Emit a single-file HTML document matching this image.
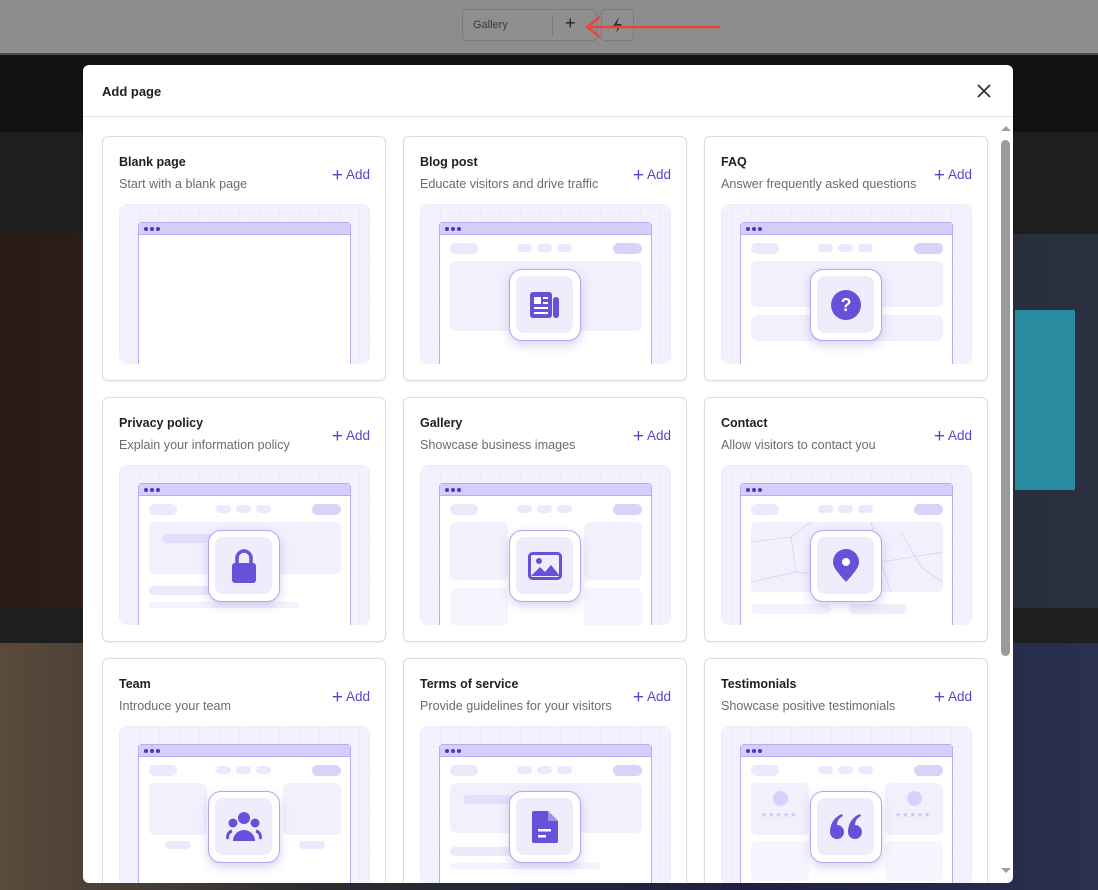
<!DOCTYPE html>
<html><head><meta charset="utf-8"><style>
*{box-sizing:border-box;margin:0;padding:0}
body{width:1098px;height:890px;overflow:hidden;position:relative;font-family:"Liberation Sans",sans-serif;background:#161616}
.bg{position:absolute}
.modal{position:absolute;left:83px;top:65px;width:930px;height:818px;background:#fff;border-radius:6px;overflow:hidden}
.hdr{height:52px;border-bottom:1px solid #e4e4e7;position:relative}
.hdr h1{position:absolute;left:19px;top:19px;font-size:13px;font-weight:bold;color:#1d1d22}
.x{position:absolute;right:21px;top:18px}
.card{position:absolute;width:284px;height:245px;border:1px solid #dcdce0;border-radius:6px;background:#fff;box-shadow:0 1px 2px rgba(0,0,0,.06)}
.t{position:absolute;left:16px;top:18px;font-size:12.5px;font-weight:bold;color:#1f1f24}
.d{position:absolute;left:16px;top:40px;font-size:12.6px;color:#6b6b72}
.add{position:absolute;right:15px;top:28px;font-size:13.5px;color:#5a45c8}
.add b{font-size:19px;font-weight:normal;vertical-align:-2px;margin-right:3px}
.il{position:absolute;left:16px;top:67px;width:251px;height:160px;border-radius:8px;overflow:hidden;background:#f3f1fd;
background-image:linear-gradient(rgba(200,195,235,.13) 1px,transparent 1px),linear-gradient(90deg,rgba(200,195,235,.13) 1px,transparent 1px);background-size:10px 10px}
.fr{position:absolute;left:19px;top:18px;width:213px;height:150px;background:#fff;border:1px solid #b6acee;border-radius:4px 4px 0 0}
.bar{height:12px;background:#d5cefb;border-bottom:1px solid #b6acee;padding:2px 0 0 5px;font-size:0}
.bar i{display:inline-block;width:4px;height:4px;border-radius:50%;background:#4b37c0;margin:2px 2px 0 0}
.p{position:absolute;border-radius:6px;background:#ece9fc}
.ib{position:absolute;left:89px;top:65px;width:72px;height:72px;background:#fff;border:1.5px solid #b3a8ee;border-radius:13px;box-shadow:0 4px 10px rgba(100,80,200,.25)}
.ib .in{position:absolute;left:6px;top:6px;width:57px;height:57px;background:#efedfb;border-radius:8px;display:flex;align-items:center;justify-content:center}
.sb{position:absolute;left:1001px;top:140px;width:9px;height:516px;background:#9b9b9b;border-radius:5px}
</style></head><body>
<div class="bg" style="left:0;top:0;width:1098px;height:55px;background:#8d8d8d;border-bottom:2px solid #4a4a4a"></div>
<div class="bg" style="left:462px;top:9px;width:135px;height:32px;border:1px solid #7c7c7c;border-radius:4px;background:#8f8f8f"></div>
<div class="bg" style="left:473px;top:19px;font-size:11px;color:#3a3a3a">Gallery</div>
<div class="bg" style="left:552px;top:15px;width:1px;height:20px;background:#777"></div>
<div class="bg" style="left:565px;top:13px;font-size:18px;color:#222">+</div>
<div class="bg" style="left:601px;top:9px;width:33px;height:32px;border:1px solid #7c7c7c;border-radius:4px;background:#8f8f8f"></div>
<svg class="bg" style="left:610px;top:16px" width="14" height="18"><path d="M9 1L3 10h5l-2 7 6-9H7z" fill="#333"/></svg>
<svg class="bg" style="left:580px;top:14px" width="145" height="24"><path d="M8 13 H140" stroke="#e8463c" stroke-width="2.5"/><path d="M20 3 L7 13 L20 23" stroke="#e8463c" stroke-width="2.5" fill="none"/></svg>
<div class="bg" style="left:0;top:57px;width:1098px;height:75px;background:#121212"></div>
<div class="bg" style="left:0;top:132px;width:1098px;height:102px;background:#1e1e1e"></div>
<div class="bg" style="left:0;top:234px;width:1098px;height:374px;background:linear-gradient(90deg,#2a1a16,#3a2420 40%,#1c2838 70%,#2a3040)"></div>
<div class="bg" style="left:1015px;top:310px;width:60px;height:180px;background:#2a8aa0"></div>
<div class="bg" style="left:0;top:608px;width:1098px;height:35px;background:#1e1e1e"></div>
<div class="bg" style="left:0;top:643px;width:1098px;height:247px;background:linear-gradient(90deg,#5a4a3a,#2a2a30 30%,#1c2240 70%,#2a3050)"></div>
<div class="modal">
<div class="hdr"><h1>Add page</h1><svg class="x" width="16" height="16"><path d="M2 2L14 14M14 2L2 14" stroke="#333" stroke-width="1.8"/></svg></div>
</div>
<div style="position:absolute;left:0;top:0;width:1013px;height:883px;overflow:hidden;clip-path:inset(118px 0 0 83px round 0 0 6px 6px)">

<div class="card" style="left:102px;top:136px"><div class="t">Blank page</div><div class="d">Start with a blank page</div><div class="add"><b>+</b>Add</div>
<div class="il"><div class="fr"><div class="bar"><i></i><i></i><i></i></div></div></div></div>

<div class="card" style="left:403px;top:136px"><div class="t">Blog post</div><div class="d">Educate visitors and drive traffic</div><div class="add"><b>+</b>Add</div>
<div class="il"><div class="fr"><div class="bar"><i></i><i></i><i></i></div>
<div class="p" style="left:10px;top:20px;width:28px;height:11px"></div><div class="p" style="left:77px;top:21px;width:15px;height:8px"></div><div class="p" style="left:97px;top:21px;width:15px;height:8px"></div><div class="p" style="left:117px;top:21px;width:15px;height:8px"></div><div class="p" style="left:173px;top:20px;width:29px;height:11px;background:#d9d3fa"></div>
<div class="p" style="left:10px;top:38px;width:192px;height:70px;background:#f2f0fd"></div></div>
<div class="ib"><div class="in"><svg width="32" height="30" viewBox="0 0 32 30"><rect x="1" y="2" width="22" height="26" rx="3" fill="#6552d8"/><rect x="24" y="7" width="6" height="21" rx="3" fill="#6552d8"/><rect x="5" y="7" width="7" height="7" fill="#fff"/><rect x="14" y="7" width="5" height="2" fill="#fff"/><rect x="14" y="12" width="5" height="2" fill="#fff"/><rect x="5" y="17" width="14" height="2" fill="#fff"/><rect x="5" y="22" width="14" height="2" fill="#fff"/></svg></div></div></div></div>

<div class="card" style="left:704px;top:136px"><div class="t">FAQ</div><div class="d">Answer frequently asked questions</div><div class="add"><b>+</b>Add</div>
<div class="il"><div class="fr"><div class="bar"><i></i><i></i><i></i></div>
<div class="p" style="left:10px;top:20px;width:28px;height:11px"></div><div class="p" style="left:77px;top:21px;width:15px;height:8px"></div><div class="p" style="left:97px;top:21px;width:15px;height:8px"></div><div class="p" style="left:117px;top:21px;width:15px;height:8px"></div><div class="p" style="left:173px;top:20px;width:29px;height:11px;background:#d9d3fa"></div>
<div class="p" style="left:10px;top:38px;width:192px;height:46px;background:#f2f0fd"></div>
<div class="p" style="left:10px;top:92px;width:192px;height:26px;background:#f2f0fd"></div></div>
<div class="ib"><div class="in"><svg width="32" height="32"><circle cx="16" cy="16" r="15" fill="#6552d8"/><text x="16" y="22" text-anchor="middle" font-size="18" font-weight="bold" fill="#fff" font-family="Liberation Sans">?</text></svg></div></div></div></div>

<div class="card" style="left:102px;top:397px"><div class="t">Privacy policy</div><div class="d">Explain your information policy</div><div class="add"><b>+</b>Add</div>
<div class="il"><div class="fr"><div class="bar"><i></i><i></i><i></i></div>
<div class="p" style="left:10px;top:20px;width:28px;height:11px"></div><div class="p" style="left:77px;top:21px;width:15px;height:8px"></div><div class="p" style="left:97px;top:21px;width:15px;height:8px"></div><div class="p" style="left:117px;top:21px;width:15px;height:8px"></div><div class="p" style="left:173px;top:20px;width:29px;height:11px;background:#d9d3fa"></div>
<div class="p" style="left:10px;top:38px;width:192px;height:52px;background:#f2f0fd"></div>
<div class="p" style="left:23px;top:50px;width:60px;height:9px;background:#e3defb"></div>
<div class="p" style="left:10px;top:102px;width:80px;height:9px"></div>
<div class="p" style="left:10px;top:118px;width:150px;height:6px;background:#f4f2fd"></div></div>
<div class="ib"><div class="in"><svg width="30" height="36" viewBox="0 0 30 36"><path d="M8 16V10a7 7 0 0 1 14 0v6" stroke="#6552d8" stroke-width="3.5" fill="none"/><rect x="3" y="15" width="24" height="20" rx="3" fill="#6552d8"/></svg></div></div></div></div>

<div class="card" style="left:403px;top:397px"><div class="t">Gallery</div><div class="d">Showcase business images</div><div class="add"><b>+</b>Add</div>
<div class="il"><div class="fr"><div class="bar"><i></i><i></i><i></i></div>
<div class="p" style="left:10px;top:20px;width:28px;height:11px"></div><div class="p" style="left:77px;top:21px;width:15px;height:8px"></div><div class="p" style="left:97px;top:21px;width:15px;height:8px"></div><div class="p" style="left:117px;top:21px;width:15px;height:8px"></div><div class="p" style="left:173px;top:20px;width:29px;height:11px;background:#d9d3fa"></div>
<div class="p" style="left:10px;top:38px;width:58px;height:58px;background:#f2f0fd"></div><div class="p" style="left:144px;top:38px;width:58px;height:58px;background:#f2f0fd"></div>
<div class="p" style="left:10px;top:104px;width:58px;height:40px;background:#f6f5fe"></div><div class="p" style="left:144px;top:104px;width:58px;height:40px;background:#f6f5fe"></div></div>
<div class="ib"><div class="in"><svg width="34" height="28" viewBox="0 0 34 28"><rect x="1.5" y="1.5" width="31" height="25" rx="3" fill="none" stroke="#6552d8" stroke-width="3"/><circle cx="11" cy="9" r="3" fill="#6552d8"/><path d="M3 24l9-9 5 5 6-7 9 11z" fill="#6552d8"/></svg></div></div></div></div>

<div class="card" style="left:704px;top:397px"><div class="t">Contact</div><div class="d">Allow visitors to contact you</div><div class="add"><b>+</b>Add</div>
<div class="il"><div class="fr"><div class="bar"><i></i><i></i><i></i></div>
<div class="p" style="left:10px;top:20px;width:28px;height:11px"></div><div class="p" style="left:77px;top:21px;width:15px;height:8px"></div><div class="p" style="left:97px;top:21px;width:15px;height:8px"></div><div class="p" style="left:117px;top:21px;width:15px;height:8px"></div><div class="p" style="left:173px;top:20px;width:29px;height:11px;background:#d9d3fa"></div>
<div class="p" style="left:10px;top:38px;width:192px;height:70px;background:#f2f0fd;border-radius:5px"><svg width="192" height="70" style="position:absolute;left:0;top:0"><path d="M0 20L40 15 45 50 0 60M40 15L60 0M45 50L90 55M60 30L75 70M120 0L130 40 192 30M130 40L140 70M150 10L170 45 192 60M100 20L120 50" stroke="#dcd7f5" fill="none"/></svg></div>
<div class="p" style="left:10px;top:120px;width:80px;height:10px;background:#f4f2fd"></div><div class="p" style="left:108px;top:120px;width:58px;height:10px;background:#f0eefc"></div></div>
<div class="ib"><div class="in"><svg width="28" height="34" viewBox="0 0 28 34"><path d="M14 33C5 23 1 18 1 13a13 13 0 0 1 26 0c0 5-4 10-13 20z" fill="#6552d8"/><circle cx="14" cy="13" r="4" fill="#fff"/></svg></div></div></div></div>

<div class="card" style="left:102px;top:658px"><div class="t">Team</div><div class="d">Introduce your team</div><div class="add"><b>+</b>Add</div>
<div class="il"><div class="fr"><div class="bar"><i></i><i></i><i></i></div>
<div class="p" style="left:10px;top:20px;width:28px;height:11px"></div><div class="p" style="left:77px;top:21px;width:15px;height:8px"></div><div class="p" style="left:97px;top:21px;width:15px;height:8px"></div><div class="p" style="left:117px;top:21px;width:15px;height:8px"></div><div class="p" style="left:173px;top:20px;width:29px;height:11px;background:#d9d3fa"></div>
<div class="p" style="left:10px;top:38px;width:58px;height:52px;background:#f2f0fd"></div><div class="p" style="left:144px;top:38px;width:58px;height:52px;background:#f2f0fd"></div>
<div class="p" style="left:26px;top:96px;width:26px;height:8px"></div><div class="p" style="left:160px;top:96px;width:26px;height:8px"></div></div>
<div class="ib"><div class="in"><svg width="36" height="32" viewBox="0 0 36 32"><circle cx="18" cy="7" r="6" fill="#6552d8"/><circle cx="7" cy="12" r="4.5" fill="#6552d8"/><circle cx="29" cy="12" r="4.5" fill="#6552d8"/><path d="M7 30a11 11 0 0 1 22 0z" fill="#6552d8"/><path d="M2 28a6 6 0 0 1 4-8M34 28a6 6 0 0 0-4-8" stroke="#6552d8" stroke-width="3" fill="none"/></svg></div></div></div></div>

<div class="card" style="left:403px;top:658px"><div class="t">Terms of service</div><div class="d">Provide guidelines for your visitors</div><div class="add"><b>+</b>Add</div>
<div class="il"><div class="fr"><div class="bar"><i></i><i></i><i></i></div>
<div class="p" style="left:10px;top:20px;width:28px;height:11px"></div><div class="p" style="left:77px;top:21px;width:15px;height:8px"></div><div class="p" style="left:97px;top:21px;width:15px;height:8px"></div><div class="p" style="left:117px;top:21px;width:15px;height:8px"></div><div class="p" style="left:173px;top:20px;width:29px;height:11px;background:#d9d3fa"></div>
<div class="p" style="left:10px;top:38px;width:192px;height:50px;background:#f2f0fd"></div>
<div class="p" style="left:23px;top:50px;width:60px;height:9px;background:#e3defb"></div>
<div class="p" style="left:10px;top:102px;width:80px;height:9px"></div>
<div class="p" style="left:10px;top:118px;width:150px;height:6px;background:#f4f2fd"></div></div>
<div class="ib"><div class="in"><svg width="28" height="34" viewBox="0 0 28 34"><path d="M3 1h14l10 10v20a2 2 0 0 1-2 2H3a2 2 0 0 1-2-2V3a2 2 0 0 1 2-2z" fill="#6552d8"/><path d="M17 1v10h10" fill="#9d90ea"/><rect x="7" y="19" width="13" height="2.5" fill="#fff"/><rect x="7" y="25" width="8" height="2.5" fill="#fff"/></svg></div></div></div></div>

<div class="card" style="left:704px;top:658px"><div class="t">Testimonials</div><div class="d">Showcase positive testimonials</div><div class="add"><b>+</b>Add</div>
<div class="il"><div class="fr"><div class="bar"><i></i><i></i><i></i></div>
<div class="p" style="left:10px;top:20px;width:28px;height:11px"></div><div class="p" style="left:77px;top:21px;width:15px;height:8px"></div><div class="p" style="left:97px;top:21px;width:15px;height:8px"></div><div class="p" style="left:117px;top:21px;width:15px;height:8px"></div><div class="p" style="left:173px;top:20px;width:29px;height:11px;background:#d9d3fa"></div>
<div class="p" style="left:10px;top:38px;width:58px;height:52px;background:#f2f0fd"><div style="position:absolute;left:22px;top:8px;width:15px;height:15px;border-radius:50%;background:#d8d1fa"></div><div style="position:absolute;left:10px;top:28px;font-size:7px;color:#cbc4f2;letter-spacing:1px">★★★★★</div></div>
<div class="p" style="left:144px;top:38px;width:58px;height:52px;background:#f2f0fd"><div style="position:absolute;left:22px;top:8px;width:15px;height:15px;border-radius:50%;background:#d8d1fa"></div><div style="position:absolute;left:10px;top:28px;font-size:7px;color:#cbc4f2;letter-spacing:1px">★★★★★</div></div>
<div class="p" style="left:10px;top:96px;width:58px;height:40px;background:#f6f5fe"></div><div class="p" style="left:144px;top:96px;width:58px;height:40px;background:#f6f5fe"></div></div>
<div class="ib"><div class="in"><svg width="34" height="26" viewBox="0 0 34 26"><path d="M1 18a7 7 0 1 0 7-7c0-4 2-7 6-9l-1-2C5 3 1 10 1 18zM19 18a7 7 0 1 0 7-7c0-4 2-7 6-9l-1-2C23 3 19 10 19 18z" fill="#6552d8"/></svg></div></div></div></div>
</div>
<div class="sb"></div>
<svg style="position:absolute;left:1000px;top:124px" width="12" height="8"><path d="M1 7L6 2 11 7z" fill="#a0a0a0"/></svg>
<svg style="position:absolute;left:1000px;top:867px" width="12" height="8"><path d="M1 1L6 6 11 1z" fill="#a0a0a0"/></svg>
</body></html>
